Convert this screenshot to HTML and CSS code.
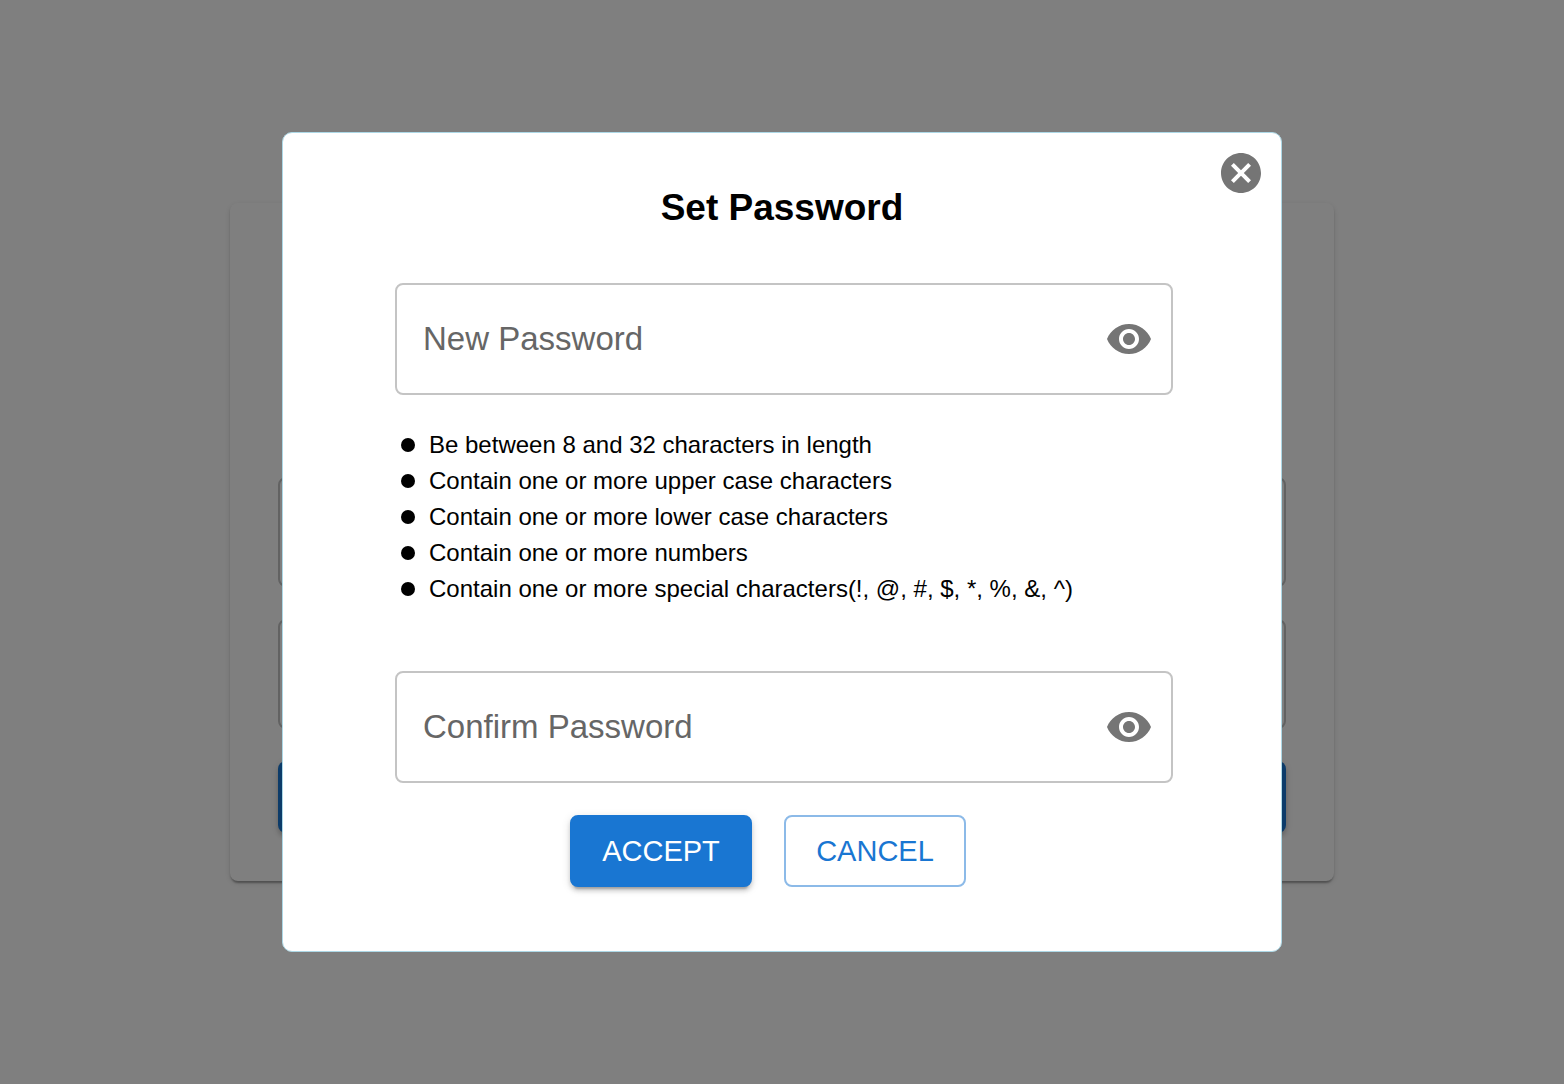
FILE: index.html
```html
<!DOCTYPE html>
<html lang="en">
<head>
  <meta charset="utf-8">
  <meta name="viewport" content="width=device-width, initial-scale=1">
  <title>Set Password</title>
  <link rel="stylesheet" href="styles.css">
</head>
<body>
  <main class="page" inert>
    <form class="login-card">
      <input class="login-input" type="text" aria-label="Username">
      <input class="login-input" type="password" aria-label="Password">
      <button class="login-submit" type="button" aria-label="Log in"></button>
    </form>
  </main>

  <div class="backdrop">
    <section class="dialog" role="dialog" aria-modal="true" aria-labelledby="dialog-title">
      <button class="icon-button close" type="button" aria-label="Close">
        <svg class="icon" viewBox="0 0 24 24" aria-hidden="true"><path d="M12 2C6.47 2 2 6.47 2 12s4.47 10 10 10 10-4.47 10-10S17.53 2 12 2zm5 13.59L15.59 17 12 13.41 8.41 17 7 15.59 10.59 12 7 8.41 8.41 7 12 10.59 15.59 7 17 8.41 13.41 12 17 15.59z"/></svg>
      </button>
      <h1 class="title" id="dialog-title">Set Password</h1>
      <form class="form">
        <div class="field">
          <input class="field-input" type="password" placeholder="New Password" aria-label="New Password" aria-describedby="rules">
          <button class="icon-button" type="button" aria-label="Show new password">
            <svg class="icon" viewBox="0 0 24 24" aria-hidden="true"><path d="M12 4.5C7 4.5 2.73 7.61 1 12c1.73 4.39 6 7.5 11 7.5s9.27-3.11 11-7.5c-1.73-4.39-6-7.5-11-7.5zM12 17c-2.76 0-5-2.24-5-5s2.24-5 5-5 5 2.24 5 5-2.24 5-5 5zm0-8c-1.66 0-3 1.34-3 3s1.34 3 3 3 3-1.34 3-3-1.34-3-3-3z"/></svg>
          </button>
        </div>
        <ul class="rules" id="rules">
          <li class="rule">Be between 8 and 32 characters in length</li>
          <li class="rule">Contain one or more upper case characters</li>
          <li class="rule">Contain one or more lower case characters</li>
          <li class="rule">Contain one or more numbers</li>
          <li class="rule">Contain one or more special characters(!, @, #, $, *, %, &amp;, ^)</li>
        </ul>
        <div class="field">
          <input class="field-input" type="password" placeholder="Confirm Password" aria-label="Confirm Password">
          <button class="icon-button" type="button" aria-label="Show confirmed password">
            <svg class="icon" viewBox="0 0 24 24" aria-hidden="true"><path d="M12 4.5C7 4.5 2.73 7.61 1 12c1.73 4.39 6 7.5 11 7.5s9.27-3.11 11-7.5c-1.73-4.39-6-7.5-11-7.5zM12 17c-2.76 0-5-2.24-5-5s2.24-5 5-5 5 2.24 5 5-2.24 5-5 5zm0-8c-1.66 0-3 1.34-3 3s1.34 3 3 3 3-1.34 3-3-1.34-3-3-3z"/></svg>
          </button>
        </div>
        <div class="actions">
          <button class="button button-primary" type="button">ACCEPT</button>
          <button class="button button-outline" type="button">CANCEL</button>
        </div>
      </form>
    </section>
  </div>
</body>
</html>
```
FILE: styles.css
```css
*,
*::before {
  box-sizing: border-box;
}

body {
  margin: 0;
  background: #fff;
  color: #000;
  font-family: Helvetica, "Liberation Sans", Arial, sans-serif;
}

button,
input {
  margin: 0;
  font-family: inherit;
}

/* Login card behind the dialog */
.page {
  display: flex;
  align-items: center;
  justify-content: center;
  min-height: 100vh;
}

.login-card {
  display: flex;
  flex-direction: column;
  gap: 32px;
  width: 100%;
  max-width: 1104px;
  padding: 274px 48px 48px;
  border-radius: 8px;
  background: #fff;
  box-shadow: 0 4px 2px -2px rgba(0, 0, 0, 0.2), 0 2px 2px rgba(0, 0, 0, 0.14), 0 2px 6px rgba(0, 0, 0, 0.12);
}

.login-input {
  height: 110px;
  border: 2px solid #c4c4c4;
  border-radius: 8px;
}

.login-submit {
  height: 72px;
  border: 0;
  border-radius: 8px;
  background: #1976d2;
  box-shadow: 0 6px 2px -4px rgba(0, 0, 0, 0.2), 0 4px 4px rgba(0, 0, 0, 0.14), 0 2px 10px rgba(0, 0, 0, 0.12);
}

/* Dialog */
.backdrop {
  position: fixed;
  inset: 0;
  display: flex;
  align-items: center;
  justify-content: center;
  overflow: auto;
  background: rgba(0, 0, 0, 0.5);
}

.dialog {
  position: relative;
  width: 100%;
  max-width: 1000px;
  padding: 48px 0 64px;
  border: 1px solid lightblue;
  border-radius: 10px;
  background: #fff;
}

.title {
  margin: 0 0 48px;
  font-size: 37px;
  line-height: 54px;
  text-align: center;
}

.form {
  padding: 0 108px 0 112px;
}

.field {
  display: flex;
  align-items: center;
  height: 112px;
  padding: 0 18px 0 26px;
  border: 2px solid #c4c4c4;
  border-radius: 8px;
}

.field-input {
  flex: 1;
  min-width: 0;
  height: 100%;
  padding: 0;
  border: 0;
  outline: 0;
  background: none;
  font-size: 33px;
}

.field-input::placeholder {
  color: #666;
  opacity: 1;
}

.icon-button {
  display: flex;
  padding: 0;
  border: 0;
  background: none;
  color: #757575;
  cursor: pointer;
}

.close {
  position: absolute;
  top: 16px;
  right: 16px;
}

.icon {
  width: 48px;
  height: 48px;
  fill: currentColor;
}

.rules {
  margin: 32px 0 64px;
  padding: 0 0 0 6px;
  list-style: none;
  font-size: 24px;
  line-height: 36px;
}

.rule {
  display: flex;
  align-items: center;
  gap: 14px;
}

.rule::before {
  content: "";
  width: 14px;
  height: 14px;
  border-radius: 50%;
  background: #000;
}

.actions {
  display: flex;
  justify-content: center;
  gap: 32px;
  margin-top: 32px;
  padding-right: 32px;
}

.button {
  min-width: 182px;
  height: 72px;
  padding: 0 30px;
  border: 2px solid transparent;
  border-radius: 8px;
  font-size: 29px;
  cursor: pointer;
}

.button-primary {
  border-color: #1976d2;
  background: #1976d2;
  color: #fff;
  box-shadow: 0 6px 2px -4px rgba(0, 0, 0, 0.2), 0 4px 4px rgba(0, 0, 0, 0.14), 0 2px 10px rgba(0, 0, 0, 0.12);
}

.button-outline {
  border-color: #8cbae8;
  background: #fff;
  color: #1976d2;
}
```
